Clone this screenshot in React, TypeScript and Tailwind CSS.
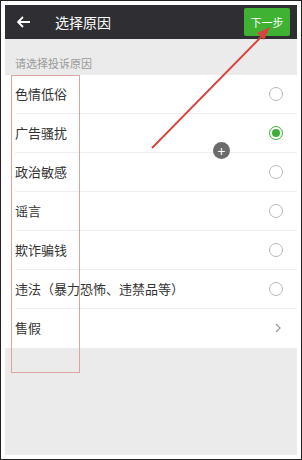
const reasons = [
  { label: '色情低俗', kind: 'radio' },
  { label: '广告骚扰', kind: 'radio', checked: true },
  { label: '政治敏感', kind: 'radio' },
  { label: '谣言', kind: 'radio' },
  { label: '欺诈骗钱', kind: 'radio' },
  { label: '违法（暴力恐怖、违禁品等）', kind: 'radio' },
  { label: '售假', kind: 'arrow' },
];

function Radio({ checked }: { checked?: boolean }) {
  if (checked) {
    return (
      <span className="flex h-[14px] w-[14px] items-center justify-center rounded-full border border-[#3cb034]">
        <span className="h-[8px] w-[8px] rounded-full bg-[#3cb034]" />
      </span>
    );
  }
  return <span className="h-[14px] w-[14px] rounded-full border border-[#b9b9b9]" />;
}

export default function App() {
  return (
    <div className="h-[460px] w-[302px] border border-[#222] bg-white p-[4px] font-['Noto_Sans_CJK_SC',sans-serif]">
      <div className="relative flex h-full flex-col bg-[#ebebeb]">
        {/* header */}
        <div className="flex h-[34px] shrink-0 items-center bg-[#2f2f33] pr-[7px]">
          <svg width="14" height="12" viewBox="0 0 14 12" className="ml-[12px]">
            <path d="M6 1 1 6l5 5M1 6h12" fill="none" stroke="#fff" strokeWidth="1.8" />
          </svg>
          <span className="ml-[24px] text-[14px] text-white">选择原因</span>
          <button className="ml-auto h-[28px] w-[46px] rounded-[2px] bg-[#3fb234] text-[11px] text-white">下一步</button>
        </div>

        <div className="px-[10px] pb-[3px] pt-[16px] text-[11px] text-[#9a9a9a]">请选择投诉原因</div>

        {/* list */}
        <div className="bg-white pl-[10px]">
          {reasons.map((r, i) => (
            <div
              key={r.label}
              className={`flex h-[39px] items-center pr-[14px] ${i < reasons.length - 1 ? 'border-b border-[#eeeeee]' : ''}`}
            >
              <span className="text-[13px] text-[#333]">{r.label}</span>
              <span className="ml-auto flex items-center">
                {r.kind === 'radio' ? (
                  <Radio checked={r.checked} />
                ) : (
                  <svg width="6" height="10" viewBox="0 0 6 10" className="mr-[2px]">
                    <path d="M1 1l4 4-4 4" fill="none" stroke="#999" strokeWidth="1.2" />
                  </svg>
                )}
              </span>
            </div>
          ))}
        </div>

        <div className="flex-1" />

        {/* annotation box */}
        <div className="absolute left-[6px] top-[70px] h-[298px] w-[69px] border border-[#d9a79d]" />

        {/* annotation arrow */}
        <svg className="absolute left-0 top-0" width="294" height="452" viewBox="0 0 294 452">
          <line x1="147" y1="143" x2="258" y2="30" stroke="#d9433c" strokeWidth="1.8" />
          <path d="M265 22 252 28 259 35Z" fill="#d9433c" />
        </svg>

        {/* floating plus */}
        <div className="absolute left-[208px] top-[137px] flex h-[17px] w-[17px] items-center justify-center rounded-full bg-[#6b6b6b] text-[14px] leading-none text-white">
          +
        </div>
      </div>
    </div>
  );
}
